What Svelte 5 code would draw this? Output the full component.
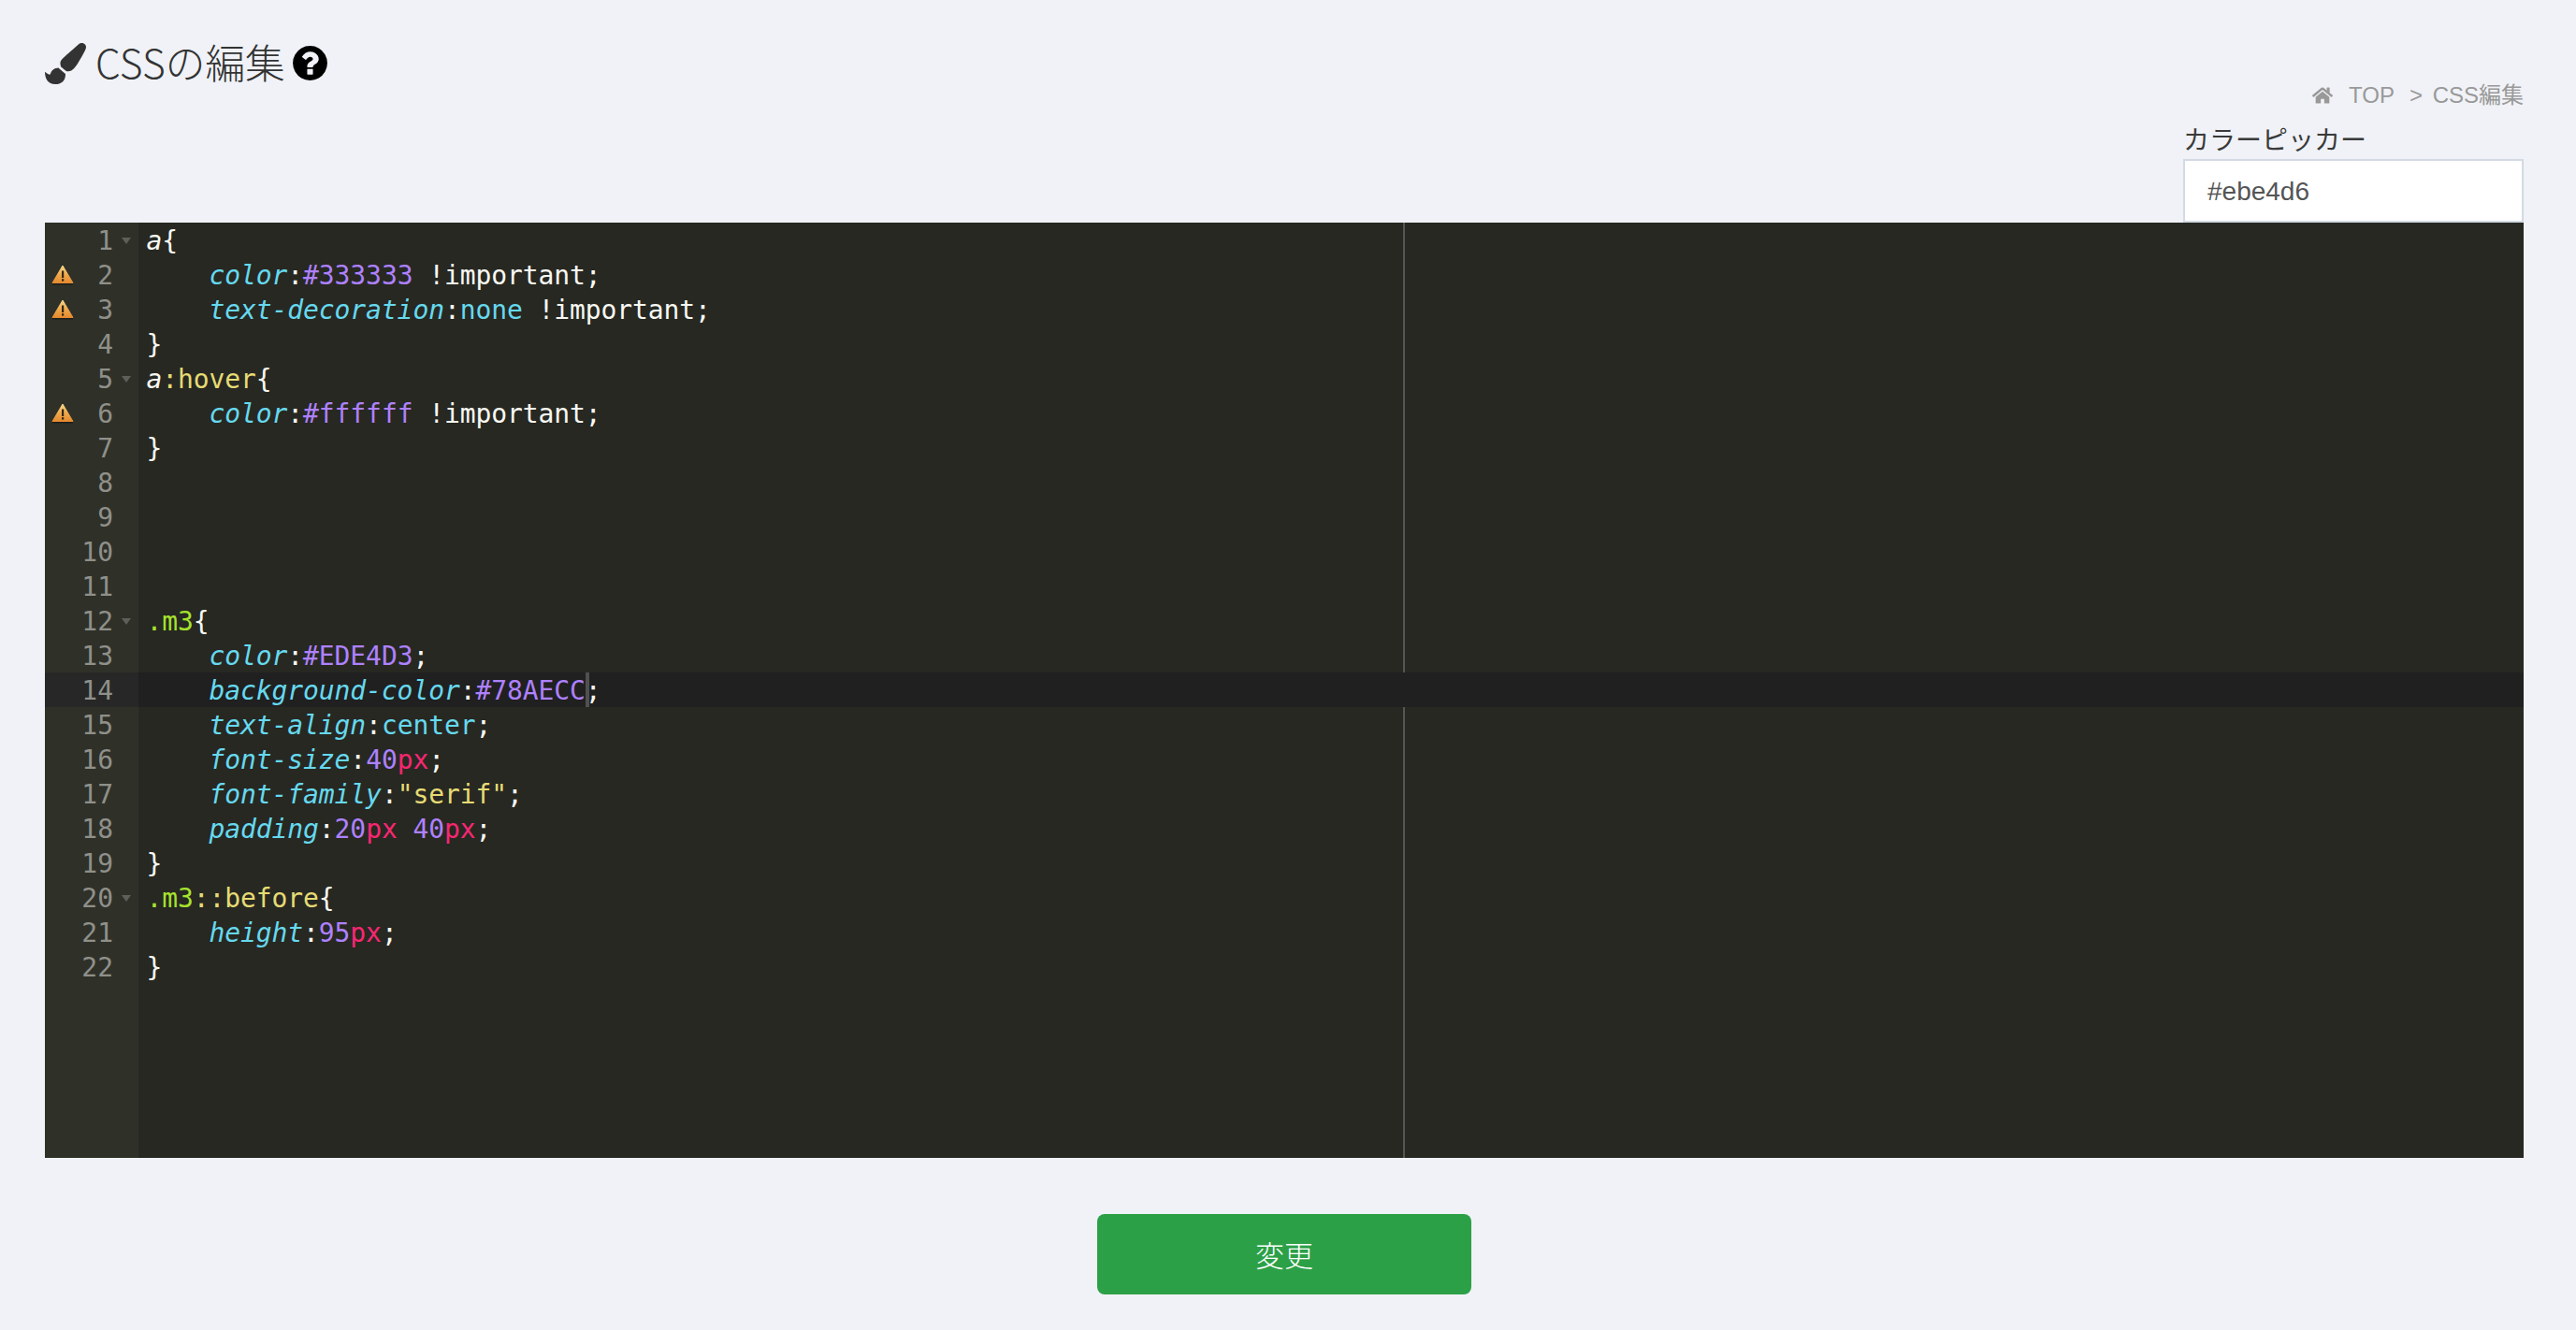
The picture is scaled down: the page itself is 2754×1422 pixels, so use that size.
<script>
  // token classes: p = property, n = constant number, u = unit, k = value keyword, s = string/pseudo, c = class, t = tag
  const lines = [
    { fold: true, t: [['t', 'a'], ['', '{']] },
    { warn: true, t: [['', '    '], ['p', 'color'], ['', ':'], ['n', '#333333'], ['', ' !important;']] },
    { warn: true, t: [['', '    '], ['p', 'text-decoration'], ['', ':'], ['k', 'none'], ['', ' !important;']] },
    { t: [['', '}']] },
    { fold: true, t: [['t', 'a'], ['s', ':hover'], ['', '{']] },
    { warn: true, t: [['', '    '], ['p', 'color'], ['', ':'], ['n', '#ffffff'], ['', ' !important;']] },
    { t: [['', '}']] },
    { t: [] },
    { t: [] },
    { t: [] },
    { t: [] },
    { fold: true, t: [['c', '.m3'], ['', '{']] },
    { t: [['', '    '], ['p', 'color'], ['', ':'], ['n', '#EDE4D3'], ['', ';']] },
    { active: true, t: [['', '    '], ['p', 'background-color'], ['', ':'], ['n', '#78AECC'], ['cursor', ''], ['', ';']] },
    { t: [['', '    '], ['p', 'text-align'], ['', ':'], ['k', 'center'], ['', ';']] },
    { t: [['', '    '], ['p', 'font-size'], ['', ':'], ['n', '40'], ['u', 'px'], ['', ';']] },
    { t: [['', '    '], ['p', 'font-family'], ['', ':'], ['s', '"serif"'], ['', ';']] },
    { t: [['', '    '], ['p', 'padding'], ['', ':'], ['n', '20'], ['u', 'px'], ['', ' '], ['n', '40'], ['u', 'px'], ['', ';']] },
    { t: [['', '}']] },
    { fold: true, t: [['c', '.m3'], ['s', '::before'], ['', '{']] },
    { t: [['', '    '], ['p', 'height'], ['', ':'], ['n', '95'], ['u', 'px'], ['', ';']] },
    { t: [['', '}']] }
  ];
</script>

<div class="page">
  <header class="head">
    <h1 class="title">
      <svg class="brush" viewBox="0 0 512 512"><path d="M167.02 309.34c-40.12 2.58-76.53 17.86-97.19 72.3-2.35 6.21-8 9.98-14.59 9.98-11.11 0-45.46-27.67-55.25-34.35C0 439.62 37.93 512 128 512c75.86 0 128-43.77 128-120.19 0-3.11-.65-6.08-.97-9.13l-88.01-73.34zM457.89 0c-15.16 0-29.37 6.71-40.21 16.45C213.27 199.05 192 203.34 192 257.09c0 13.7 3.25 26.76 8.73 38.7l63.82 53.18c7.21 1.8 14.64 3.03 22.39 3.03 62.11 0 98.11-45.47 211.16-256.46 7.38-14.35 13.9-29.85 13.9-45.99C512 20.64 486 0 457.89 0z"/></svg>
      <span class="title-text">CSSの編集</span>
      <svg class="help" viewBox="0 0 1792 1792"><path d="M1024 1376v-192q0-14-9-23t-23-9h-192q-14 0-23 9t-9 23v192q0 14 9 23t23 9h192q14 0 23-9t9-23zm256-672q0-88-55.5-163t-138.5-116-170-41q-243 0-371 213-15 24 8 42l132 100q7 6 19 6 16 0 25-12 53-68 86-92 34-24 86-24 48 0 85.5 26t37.5 59q0 38-20 61t-68 45q-63 28-115.5 86.5t-52.5 125.5v36q0 14 9 23t23 9h192q14 0 23-9t9-23q0-19 21.5-49.5t54.5-49.5q32-18 49-28.5t46-35 44.5-48 28-60.5 12.5-81zm384 192q0 209-103 385.5t-279.5 279.5-385.5 103-385.5-103-279.5-279.5-103-385.5 103-385.5 279.5-279.5 385.5-103 385.5 103 279.5 279.5 103 385.5z"/></svg>
    </h1>
    <div class="side">
      <nav class="crumb">
        <svg class="home" viewBox="0 0 576 512"><path d="M280.37 148.26L96 300.11V464a16 16 0 0 0 16 16l112.06-.29a16 16 0 0 0 15.92-16V368a16 16 0 0 1 16-16h64a16 16 0 0 1 16 16v95.64a16 16 0 0 0 16 16.05L464 480a16 16 0 0 0 16-16V300L295.67 148.26a12.19 12.19 0 0 0-15.3 0zM571.6 251.47L488 182.56V44.05a12 12 0 0 0-12-12h-56a12 12 0 0 0-12 12v72.61L318.47 43a48 48 0 0 0-61 0L4.34 251.47a12 12 0 0 0-1.6 16.9l25.5 31A12 12 0 0 0 45.15 301l235.22-193.74a12.19 12.19 0 0 1 15.3 0L530.9 301a12 12 0 0 0 16.9-1.6l25.5-31a12 12 0 0 0-1.7-16.93z"/></svg>
        <span class="top">TOP</span>
        <span class="cur">&gt; CSS編集</span>
      </nav>
      <div class="picker-label">カラーピッカー</div>
      <div class="picker">#ebe4d6</div>
    </div>
  </header>

  <div class="editor">
    <div class="margin"></div>
    {#each lines as line, i}
      <div class="row" class:active={line.active}>
        <div class="gutter">
          {#if line.warn}
            <svg class="warn" viewBox="0 0 24 22">
              <defs>
                <linearGradient id="wg{i}" x1="0" y1="0" x2="0" y2="1">
                  <stop offset="0" stop-color="#f7d98a" />
                  <stop offset="0.55" stop-color="#efa64a" />
                  <stop offset="1" stop-color="#e58a30" />
                </linearGradient>
              </defs>
              <rect x="1" y="20" width="22" height="1.5" fill="#1d1e19" />
              <path d="M12 1 L23 19.5 H1 Z" fill="url(#wg{i})" stroke="url(#wg{i})" stroke-width="1" stroke-linejoin="round" />
              <rect x="11" y="6.5" width="2.2" height="7.5" fill="#33270f" />
              <rect x="11" y="15.2" width="2.2" height="2.4" fill="#33270f" />
            </svg>
          {/if}
          <span class="num">{i + 1}</span>
          {#if line.fold}<span class="fold"></span>{/if}
        </div>
        <div class="code">{#each line.t as tok}{#if tok[0] === 'cursor'}<span class="cursor"></span>{:else}<span class={tok[0]}>{tok[1]}</span>{/if}{/each}</div>
      </div>
    {/each}
    <div class="rest"><div class="rest-gutter"></div></div>
  </div>

  <div class="actions">
    <button class="submit" type="button">変更</button>
  </div>
</div>

<style>
  :global(body) {
    background: #f0f2f7;
  }

  .page {
    padding: 0 56px 0 48px;
    height: 1422px;
    box-sizing: border-box;
    overflow: hidden;
    color: #333;
    font-family: 'Noto Sans CJK JP', sans-serif;
  }

  .head {
    display: flex;
    justify-content: space-between;
    align-items: flex-start;
    height: 238px;
  }

  .title {
    display: flex;
    align-items: center;
    margin: 0;
    padding-top: 42px;
    font-size: 42.7px;
    line-height: 46px;
    font-weight: 300;
  }

  .title-text {
    margin-bottom: 5px;
  }

  .brush {
    width: 44px;
    height: 44px;
    fill: #333;
    margin-right: 10px;
  }

  .help {
    width: 43px;
    height: 43px;
    fill: #000;
    margin-left: 5px;
    margin-bottom: 1px;
  }

  .side {
    width: 364px;
    padding-top: 86px;
  }

  .crumb {
    display: flex;
    justify-content: flex-end;
    align-items: baseline;
    height: 32px;
    line-height: 32px;
    font-family: 'Liberation Sans', 'Noto Sans CJK JP', sans-serif;
    font-size: 24px;
    color: #999;
  }

  .home {
    align-self: center;
    width: 22px;
    height: 20px;
    fill: #999;
    margin-right: 17px;
  }

  .top {
    margin-right: 16px;
  }

  .cur {
    word-spacing: 4px;
  }

  .picker-label {
    margin-top: 11px;
    margin-bottom: 3px;
    height: 38px;
    line-height: 38px;
    font-size: 28px;
    font-weight: 400;
    color: #3a3a3a;
  }

  .picker {
    box-sizing: border-box;
    height: 68px;
    background: #fff;
    border: 2px solid #d3dae3;
    padding: 0 24px;
    line-height: 66px;
    font-family: 'Liberation Sans', sans-serif;
    font-size: 28px;
    color: #555;
  }

  .editor {
    position: relative;
    height: 1000px;
    background: #272822;
    display: flex;
    flex-direction: column;
    font-family: 'DejaVu Sans Mono', monospace;
    font-size: 28px;
    line-height: 39px;
    color: #f8f8f2;
  }

  .margin {
    position: absolute;
    top: 0;
    bottom: 0;
    left: 1452px;
    width: 2px;
    background: #555;
  }

  .row {
    display: flex;
    height: 37px;
  }

  .row.active {
    position: relative;
    background: #202020;
  }

  .gutter {
    position: relative;
    flex: none;
    width: 100px;
    background: #2f3129;
    color: #8f908a;
    box-sizing: border-box;
    text-align: right;
    padding-right: 27px;
  }

  .row.active .gutter {
    background: #272727;
  }

  .warn {
    position: absolute;
    left: 7px;
    top: 8px;
    width: 24px;
    height: 22px;
  }

  .fold {
    position: absolute;
    left: 82px;
    top: 16px;
    width: 0;
    height: 0;
    border-left: 5px solid transparent;
    border-right: 5px solid transparent;
    border-top: 7px solid #5e5f59;
  }

  .code {
    padding-left: 8.5px;
    white-space: pre;
    letter-spacing: -0.1px;
  }

  .cursor {
    display: inline-block;
    width: 0;
    height: 37px;
    vertical-align: top;
    border-left: 4px solid #505050;
    margin-right: -4px;
  }

  .rest {
    flex: 1;
    display: flex;
  }

  .rest-gutter {
    width: 100px;
    background: #2f3129;
  }

  .t { font-style: italic; }
  .p { color: #66d9ef; font-style: italic; }
  .n { color: #ae81ff; }
  .u { color: #f92672; }
  .k { color: #66d9ef; }
  .s { color: #e6db74; }
  .c { color: #a6e22e; }

  .actions {
    display: flex;
    justify-content: center;
    padding-top: 60px;
  }

  .submit {
    width: 400px;
    height: 86px;
    border: 0;
    border-radius: 8px;
    padding: 0 0 2px;
    background: #2ca047;
    color: #fff;
    font-family: 'Noto Sans CJK JP', sans-serif;
    font-size: 31px;
    font-weight: 300;
  }
</style>
